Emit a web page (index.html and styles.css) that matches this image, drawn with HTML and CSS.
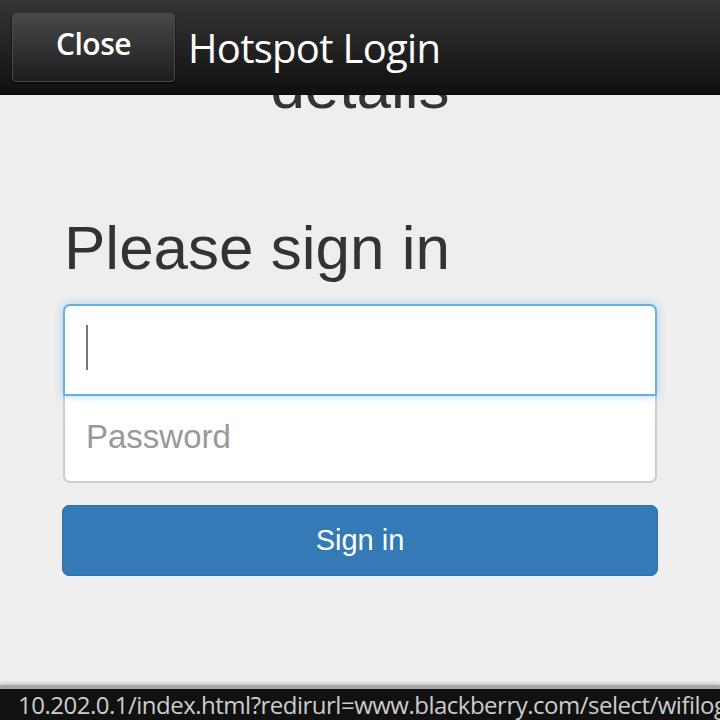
FILE: index.html
```html
<!DOCTYPE html>
<html>
<head>
<meta charset="utf-8">
<link rel="stylesheet" href="styles.css">
</head>
<body>
<div class="page">
  <div class="content">
    <div class="details">details</div>
    <form class="signin">
      <h2 class="heading">Please sign in</h2>
      <div class="field field-top"><span class="caret"></span></div>
      <div class="field field-bottom"><span class="placeholder">Password</span></div>
      <button type="button" class="btn">Sign in</button>
    </form>
  </div>
  <header class="titlebar">
    <div class="close-btn">Close</div>
    <div class="title">Hotspot Login</div>
  </header>
  <footer class="urlbar">
    <div class="url">10.202.0.1/index.html?redirurl=www.blackberry.com/select/wifilogin</div>
  </footer>
</div>
</body>
</html>
```
FILE: styles.css
```css
html, body {
  margin: 0;
  padding: 0;
}
body {
  width: 720px;
  height: 720px;
  overflow: hidden;
  background: #eeeeee;
  font-family: "Liberation Sans", Arial, sans-serif;
}
.page {
  position: relative;
  width: 720px;
  height: 720px;
  overflow: hidden;
}
.titlebar {
  position: absolute;
  top: 0;
  left: 0;
  right: 0;
  height: 94px;
  background: linear-gradient(#353535, #101010);
  display: flex;
  align-items: center;
  box-shadow: 0 1px 0 #0a0a0a;
}
.close-btn {
  margin-left: 12px;
  width: 163px;
  height: 69px;
  box-sizing: border-box;
  border: 1px solid #4a4a4a;
  border-radius: 4px;
  background: linear-gradient(#484848, #1d1d1d);
  color: #fff;
  font-family: "Open Sans", sans-serif;
  font-weight: 600;
  font-size: 30px;
  display: flex;
  align-items: center;
  justify-content: center;
  letter-spacing: -0.5px;
  padding-bottom: 8px;
  box-shadow: 0 1px 2px #000;
}
.title {
  margin-left: 13px;
  color: #fff;
  font-family: "Open Sans", sans-serif;
  font-size: 40px;
  letter-spacing: -0.7px;
}
.content {
  display: flex;
  flex-direction: column;
  align-items: center;
}
.details {
  margin-top: 52px;
  font-size: 62px;
  line-height: 70px;
  height: 70px;
  color: #333;
}
.signin {
  width: 594px;
  margin-top: 91px;
  display: flex;
  flex-direction: column;
}
.heading {
  margin: 0 0 21px 1px;
  font-weight: 400;
  font-size: 62px;
  line-height: 70px;
  color: #333;
}
.field {
  background: #fff;
  box-sizing: border-box;
  display: flex;
  align-items: center;
  padding-left: 21px;
}
.field-top {
  height: 92px;
  border: 2px solid #66afe9;
  border-radius: 7px 7px 0 0;
  box-shadow: 0 0 8px rgba(102, 175, 233, 0.5);
  position: relative;
  z-index: 1;
}
.field-bottom {
  height: 87px;
  border: 2px solid #cccccc;
  border-top: none;
  border-radius: 0 0 7px 7px;
}
.caret {
  width: 2px;
  height: 45px;
  background: #777;
  margin-top: -6px;
}
.placeholder {
  font-size: 33px;
  color: #999;
  margin-top: -4px;
}
.btn {
  margin-top: 22px;
  height: 71px;
  width: 596px;
  margin-left: -1px;
  border: 1px solid #2e6da4;
  border-radius: 7px;
  background: #337ab7;
  color: #fff;
  font-family: "Liberation Sans", Arial, sans-serif;
  font-size: 29px;
}
.urlbar {
  position: absolute;
  left: 0;
  right: 0;
  bottom: 0;
  height: 35px;
  box-sizing: border-box;
  background: #111;
  border-top: 4px solid #a8a8a8;
  box-shadow: 0 -2px 3px rgba(0,0,0,0.15);
  display: flex;
  align-items: center;
  overflow: hidden;
}
.url {
  padding-left: 18px;
  white-space: nowrap;
  color: #ccc;
  font-family: "Open Sans", sans-serif;
  font-size: 24px;
  letter-spacing: -0.5px;
}
```
